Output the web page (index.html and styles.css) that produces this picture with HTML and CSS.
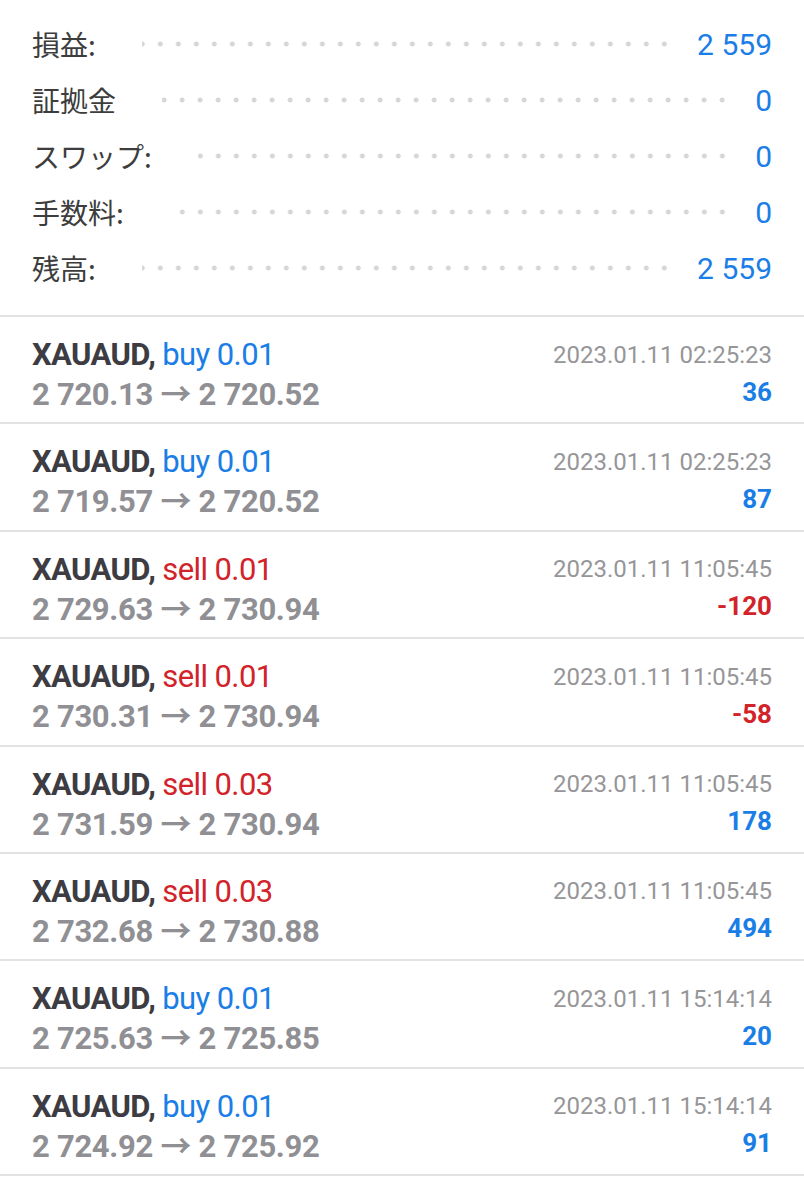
FILE: index.html
```html
<!DOCTYPE html>
<html lang="ja">
<head>
    <meta charset="UTF-8">
    <meta name="viewport" content="width=device-width, initial-scale=1.0">
    <title>履歴</title>
    <link rel="stylesheet" href="styles.css">
</head>
<body>

<div class="summary">
    <div class="sum-row"><span class="sum-label">損益:</span><span class="leader"></span><span class="sum-value">2 559</span></div>
    <div class="sum-row"><span class="sum-label">証拠金</span><span class="leader"></span><span class="sum-value">0</span></div>
    <div class="sum-row"><span class="sum-label">スワップ:</span><span class="leader"></span><span class="sum-value">0</span></div>
    <div class="sum-row"><span class="sum-label">手数料:</span><span class="leader"></span><span class="sum-value">0</span></div>
    <div class="sum-row"><span class="sum-label">残高:</span><span class="leader"></span><span class="sum-value">2 559</span></div>
</div>

<div class="trades">
    <div class="trade">
        <div class="line">
            <span class="title">XAUAUD, <span class="buy">buy 0.01</span></span>
            <span class="time">2023.01.11 02:25:23</span>
        </div>
        <div class="line">
            <span class="prices">2 720.13 → 2 720.52</span>
            <span class="profit">36</span>
        </div>
    </div>
    <div class="trade">
        <div class="line">
            <span class="title">XAUAUD, <span class="buy">buy 0.01</span></span>
            <span class="time">2023.01.11 02:25:23</span>
        </div>
        <div class="line">
            <span class="prices">2 719.57 → 2 720.52</span>
            <span class="profit">87</span>
        </div>
    </div>
    <div class="trade">
        <div class="line">
            <span class="title">XAUAUD, <span class="sell">sell 0.01</span></span>
            <span class="time">2023.01.11 11:05:45</span>
        </div>
        <div class="line">
            <span class="prices">2 729.63 → 2 730.94</span>
            <span class="profit loss">-120</span>
        </div>
    </div>
    <div class="trade">
        <div class="line">
            <span class="title">XAUAUD, <span class="sell">sell 0.01</span></span>
            <span class="time">2023.01.11 11:05:45</span>
        </div>
        <div class="line">
            <span class="prices">2 730.31 → 2 730.94</span>
            <span class="profit loss">-58</span>
        </div>
    </div>
    <div class="trade">
        <div class="line">
            <span class="title">XAUAUD, <span class="sell">sell 0.03</span></span>
            <span class="time">2023.01.11 11:05:45</span>
        </div>
        <div class="line">
            <span class="prices">2 731.59 → 2 730.94</span>
            <span class="profit">178</span>
        </div>
    </div>
    <div class="trade">
        <div class="line">
            <span class="title">XAUAUD, <span class="sell">sell 0.03</span></span>
            <span class="time">2023.01.11 11:05:45</span>
        </div>
        <div class="line">
            <span class="prices">2 732.68 → 2 730.88</span>
            <span class="profit">494</span>
        </div>
    </div>
    <div class="trade">
        <div class="line">
            <span class="title">XAUAUD, <span class="buy">buy 0.01</span></span>
            <span class="time">2023.01.11 15:14:14</span>
        </div>
        <div class="line">
            <span class="prices">2 725.63 → 2 725.85</span>
            <span class="profit">20</span>
        </div>
    </div>
    <div class="trade">
        <div class="line">
            <span class="title">XAUAUD, <span class="buy">buy 0.01</span></span>
            <span class="time">2023.01.11 15:14:14</span>
        </div>
        <div class="line">
            <span class="prices">2 724.92 → 2 725.92</span>
            <span class="profit">91</span>
        </div>
    </div>
    <div class="trade">
        <div class="line">
            <span class="title">XAUAUD, <span class="buy">buy 0.01</span></span>
            <span class="time">2023.01.11 15:14:14</span>
        </div>
        <div class="line">
            <span class="prices">2 724.92 → 2 725.92</span>
            <span class="profit">91</span>
        </div>
    </div>
</div>

</body>
</html>
```

FILE: styles.css
```css
body {
    margin: 0;
    padding: 0;
    background: #fff;
    font-family: Roboto, "Noto Sans CJK JP", sans-serif;
    overflow: hidden;
}
.summary {
    padding: 16px 32px 19px 32px;
    border-bottom: 2px solid #e2e2e2;
}
.sum-row {
    display: flex;
    align-items: center;
    height: 56px;
}
.sum-label {
    font-family: "Noto Sans CJK JP", sans-serif;
    font-size: 28px;
    color: #3d3d3d;
}
.leader {
    flex: 1;
    height: 6px;
    margin: 0 24px 0 46px;
    background: radial-gradient(circle, #d6d6d6 2.2px, transparent 2.8px) right center / 18px 6px repeat-x;
}
.sum-value {
    font-size: 30px;
    color: #1a7ee6;
}
.trade {
    padding: 19px 32px 12.4px 32px;
    border-bottom: 2px solid #e2e2e2;
}
.line {
    display: flex;
    justify-content: space-between;
    align-items: center;
    height: 37px;
}
.title {
    font-size: 31px;
    font-weight: 700;
    color: #3c3c42;
    letter-spacing: -0.6px;
}
.buy, .sell {
    font-weight: 400;
    color: #1a7ee6;
}
.sell {
    color: #d2232a;
}
.time {
    font-size: 24px;
    color: #969699;
}
.prices {
    font-size: 31px;
    font-weight: 700;
    color: #8f8f94;
    letter-spacing: -0.3px;
}
.profit {
    font-size: 26px;
    font-weight: 700;
    color: #1a7ee6;
}
.loss {
    color: #d2232a;
}
```
